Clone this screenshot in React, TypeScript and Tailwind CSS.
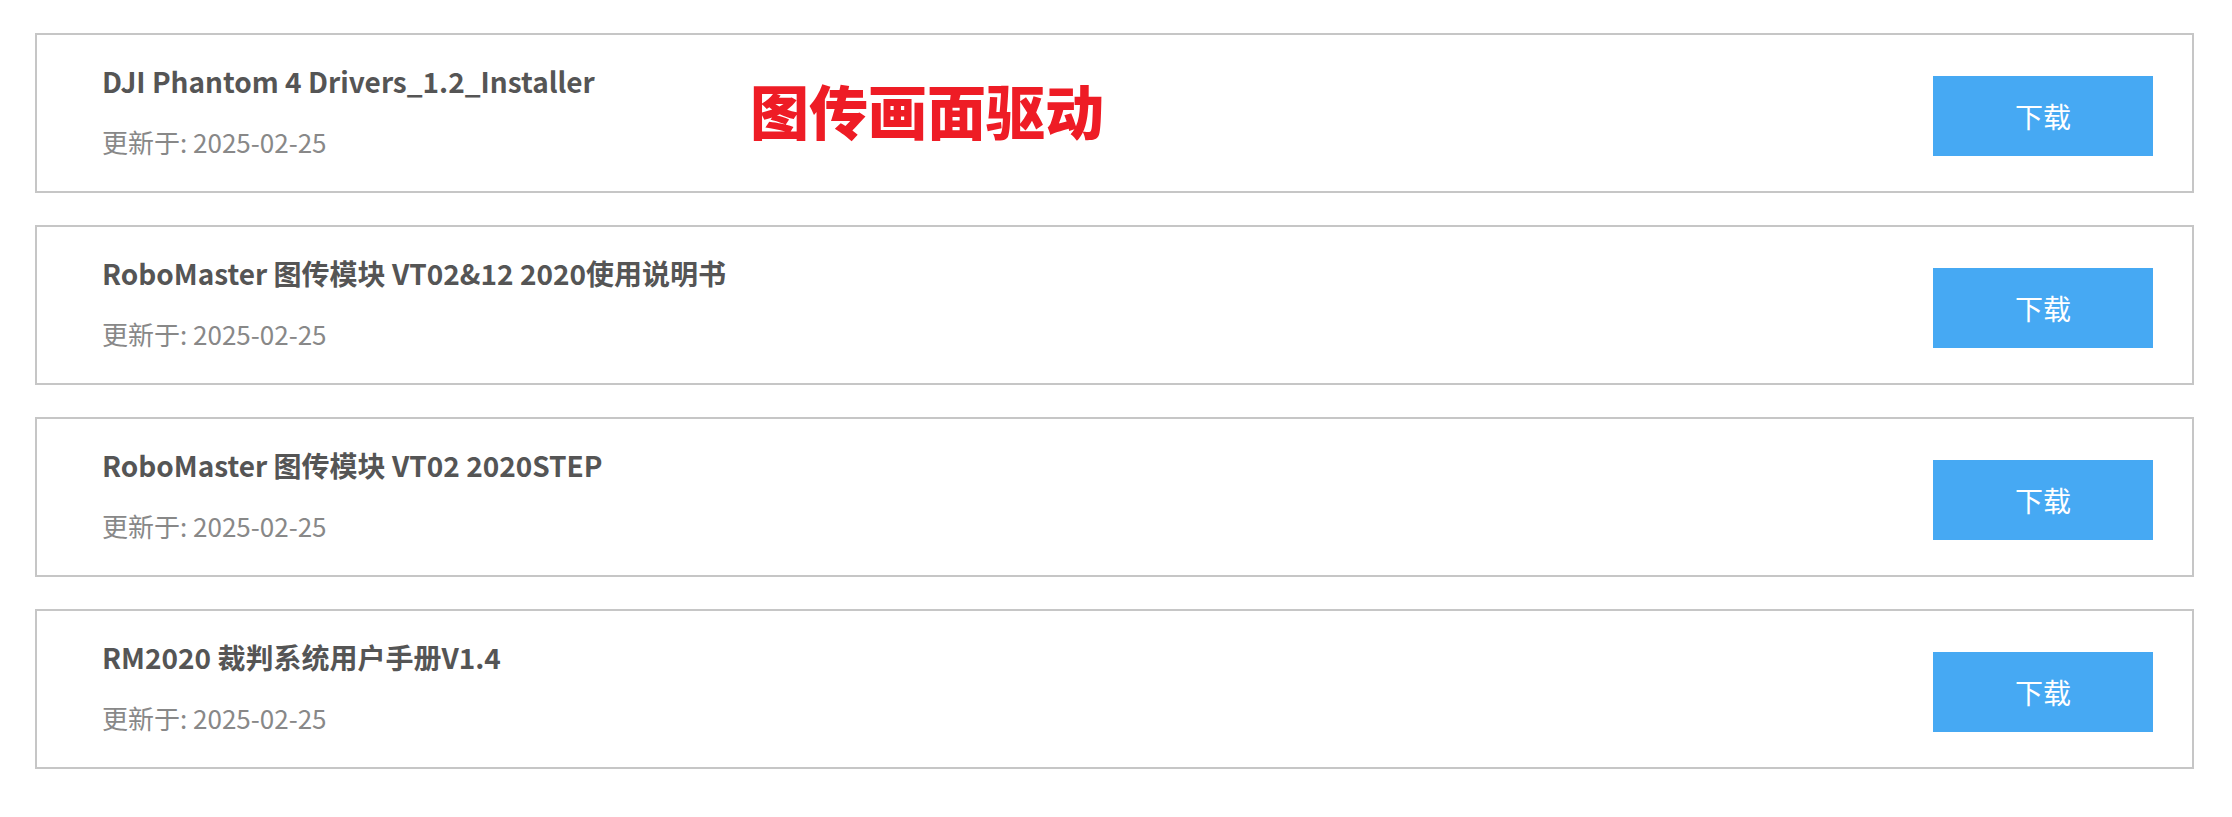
import React from "react";

const items = [
  "DJI Phantom 4 Drivers_1.2_Installer",
  "RoboMaster 图传模块 VT02&12 2020使用说明书",
  "RoboMaster 图传模块 VT02 2020STEP",
  "RM2020 裁判系统用户手册V1.4",
];

export default function App() {
  return (
    <div
      className="relative min-h-[817px] w-[2232px] bg-white pl-[35px] pr-[38px] pt-[33px]"
      style={{ fontFamily: '"Noto Sans CJK SC", "Noto Sans", sans-serif' }}
    >
      <div className="flex flex-col gap-[32px]">
        {items.map((t) => (
          <div
            key={t}
            className="flex h-[160px] items-center justify-between border-2 border-[#c6c6c6] bg-white pl-[65px] pr-[39px]"
          >
            <div className="flex flex-col pb-[5px]">
              <div className="text-[28px] font-bold leading-[36px] text-[#555555]">{t}</div>
              <div className="mt-[27px] text-[26px] leading-[32px] text-[#888888]">更新于: 2025-02-25</div>
            </div>
            <button className="mt-[6px] flex h-[80px] w-[220px] items-center justify-center bg-[#46a9f3] text-[28px] text-white">
              下载
            </button>
          </div>
        ))}
      </div>
      <div className="absolute left-[750px] top-[72px] text-[59px] font-black leading-[76px] text-[#ee1c25]">
        图传画面驱动
      </div>
    </div>
  );
}
